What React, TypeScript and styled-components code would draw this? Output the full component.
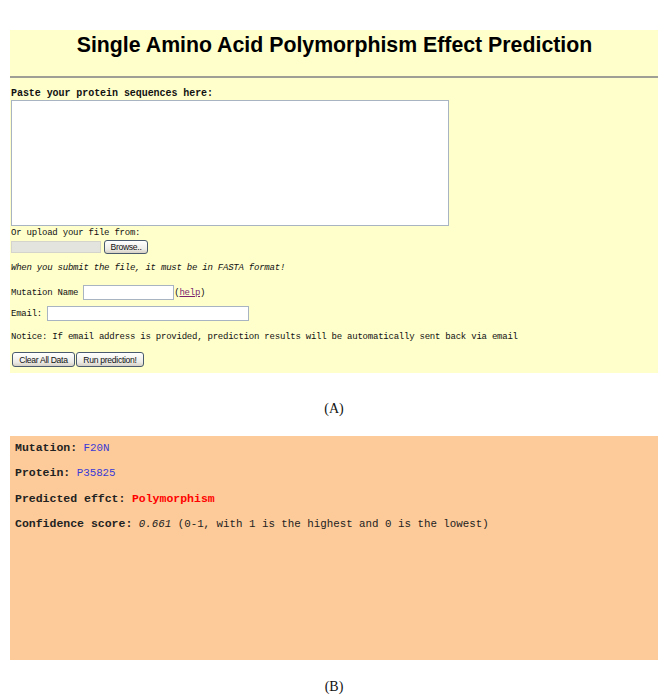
import styled, { createGlobalStyle } from "styled-components"

const GlobalStyle = createGlobalStyle`
  html, body {
    margin: 0;
    padding: 0;
    background: #ffffff;
  }
`

const mono = `"Liberation Mono", "DejaVu Sans Mono", monospace`

const Page = styled.div`
  width: 660px;
  height: 696px;
  overflow: hidden;
  padding: 30px 2px 0 10px;
  box-sizing: border-box;
`

const FormPanel = styled.section`
  background: #ffffcc;
  padding: 0 0 6px 1px;
  font-family: ${mono};
  color: #111;
`

const TitleBar = styled.div`
  height: 46px;
  padding-top: 3px;
  box-sizing: border-box;
  text-align: center;
`

const Title = styled.h1`
  margin: 0;
  font-family: "Liberation Sans", Arial, sans-serif;
  font-weight: bold;
  font-size: 21.3px;
  line-height: 24px;
  color: #000;
`

const Rule = styled.hr`
  margin: 0 0 0 -1px;
  border: none;
  border-top: 2px solid #a09f96;
  height: 0;
`

const Line = styled.div<{ $top: number; $bold?: boolean; $italic?: boolean }>`
  margin-top: ${(p) => p.$top}px;
  font-size: ${(p) => (p.$bold ? "10px" : "9px")};
  letter-spacing: ${(p) => (p.$bold ? "-0.06px" : "-0.23px")};
  font-weight: ${(p) => (p.$bold ? "bold" : "normal")};
  font-style: ${(p) => (p.$italic ? "italic" : "normal")};
  line-height: 14px;
  white-space: nowrap;
`

const SequenceBox = styled.textarea`
  display: block;
  margin-top: -1px;
  width: 438px;
  height: 126px;
  box-sizing: border-box;
  border: 1px solid #a8b4c2;
  background: #fff;
  resize: none;
  padding: 0;
`

const FileRow = styled.div`
  display: flex;
  align-items: center;
  gap: 3px;
  height: 13px;
`

const FileField = styled.span`
  width: 90px;
  height: 12px;
  background: #e4e4df;
  border: 1px solid #d4d4cc;
  box-sizing: border-box;
`

const XpButton = styled.button<{ $w: number; $h: number }>`
  width: ${(p) => p.$w}px;
  height: ${(p) => p.$h}px;
  padding: 0;
  border: 1px solid #4a5a6e;
  border-radius: 3px;
  background: linear-gradient(#ffffff, #ecebe6 70%, #d6d0c5);
  font-family: "Liberation Sans", Arial, sans-serif;
  font-size: 8.6px;
  letter-spacing: -0.3px;
  line-height: 12px;
  color: #111;
  box-sizing: border-box;
`

const FieldRow = styled.div<{ $top: number }>`
  display: flex;
  align-items: center;
  height: 15px;
  margin-top: ${(p) => p.$top}px;
  font-size: 9px;
  letter-spacing: -0.23px;
  white-space: nowrap;
`

const TextField = styled.input<{ $w: number; $gap: number }>`
  width: ${(p) => p.$w}px;
  height: 15px;
  margin-left: ${(p) => p.$gap}px;
  box-sizing: border-box;
  border: 1px solid #a8b4c2;
  background: #fff;
  padding: 0;
`

const HelpLink = styled.a`
  color: #7a1f6e;
  text-decoration: underline;
`

const ButtonRow = styled.div`
  display: flex;
  gap: 1px;
  margin-top: 8px;
  padding-left: 1px;
`

const Caption = styled.div<{ $h: number; $pad: number }>`
  height: ${(p) => p.$h}px;
  padding-top: ${(p) => p.$pad}px;
  box-sizing: border-box;
  text-align: center;
  font-family: "Liberation Serif", "Times New Roman", serif;
  font-size: 14px;
  line-height: 16px;
  color: #111;
`

const ResultPanel = styled.section`
  background: #fdcb99;
  height: 224px;
  padding: 2px 0 0 5px;
  box-sizing: border-box;
  font-family: ${mono};
  color: #222;
`

const ResultRow = styled.div`
  line-height: 20px;
  margin-bottom: 5.4px;
  font-size: 10.8px;
  white-space: nowrap;
`

const Label = styled.b`
  font-size: 11.5px;
  font-weight: bold;
`

const Value = styled.span<{ $tone: "blue" | "red" | "plain" }>`
  color: ${(p) => (p.$tone === "blue" ? "#3a3ad6" : p.$tone === "red" ? "#ff0000" : "#222")};
  font-weight: ${(p) => (p.$tone === "red" ? "bold" : "normal")};
  font-size: ${(p) => (p.$tone === "red" ? "11.5px" : "10.8px")};
`

export default function App() {
  return (
    <>
      <GlobalStyle />
      <Page>
        <FormPanel>
          <TitleBar>
            <Title>Single Amino Acid Polymorphism Effect Prediction</Title>
          </TitleBar>
          <Rule />
          <Line $top={9} $bold>Paste your protein sequences here:</Line>
          <SequenceBox />
          <Line $top={0}>Or upload your file from:</Line>
          <FileRow>
            <FileField />
            <XpButton $w={44} $h={14}>Browse..</XpButton>
          </FileRow>
          <Line $top={8} $italic>When you submit the file, it must be in FASTA format!</Line>
          <FieldRow $top={10}>
            Mutation Name
            <TextField $w={91} $gap={5} />
            (<HelpLink href="#">help</HelpLink>)
          </FieldRow>
          <FieldRow $top={6}>
            Email:
            <TextField $w={202} $gap={5} />
          </FieldRow>
          <Line $top={9}>
            Notice: If email address is provided, prediction results will be automatically sent back via email
          </Line>
          <ButtonRow>
            <XpButton $w={63} $h={15}>Clear All Data</XpButton>
            <XpButton $w={68} $h={15}>Run prediction!</XpButton>
          </ButtonRow>
        </FormPanel>
        <Caption $h={63} $pad={28}>(A)</Caption>
        <ResultPanel>
          <ResultRow>
            <Label>Mutation:</Label> <Value $tone="blue">F20N</Value>
          </ResultRow>
          <ResultRow>
            <Label>Protein:</Label> <Value $tone="blue">P35825</Value>
          </ResultRow>
          <ResultRow>
            <Label>Predicted effct:</Label> <Value $tone="red">Polymorphism</Value>
          </ResultRow>
          <ResultRow>
            <Label>Confidence score:</Label> <i>0.661</i> (0-1, with 1 is the highest and 0 is the lowest)
          </ResultRow>
        </ResultPanel>
        <Caption $h={35} $pad={19}>(B)</Caption>
      </Page>
    </>
  )
}
